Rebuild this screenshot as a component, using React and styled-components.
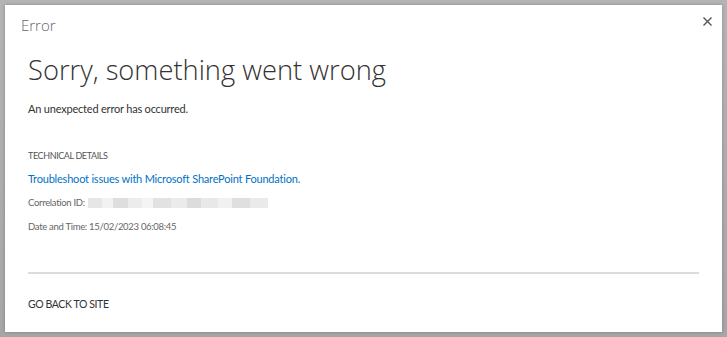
import React from 'react'
import styled, { createGlobalStyle } from 'styled-components'

const GlobalStyle = createGlobalStyle`
  html, body {
    margin: 0;
    padding: 0;
    background: #a9a9a9;
  }
  body {
    font-family: Lato, 'Open Sans', sans-serif;
  }
`

const Backdrop = styled.div`
  width: 727px;
  height: 337px;
  box-sizing: border-box;
  padding: 5px;
  background: linear-gradient(180deg, #b4b4b4 0%, #a6a6a6 100%);
`

const Dialog = styled.div`
  position: relative;
  width: 717px;
  height: 327px;
  box-sizing: border-box;
  background: #fff;
  padding: 9px 23px 0 16px;
  box-shadow: 0 0 3px rgba(0, 0, 0, 0.25);
`

const DialogTitle = styled.div`
  font-family: 'Open Sans', sans-serif;
  font-size: 15px;
  font-weight: 300;
  color: #666;
  line-height: 22px;
`

const Close = styled.button`
  position: absolute;
  top: 8px;
  right: 7px;
  width: 16px;
  height: 16px;
  padding: 0;
  border: 0;
  background: none;
  display: flex;
  align-items: center;
  justify-content: center;
`

const Body = styled.div`
  padding-left: 7px;
`

const Heading = styled.h1`
  margin: 14px 0 0;
  font-family: 'Open Sans', sans-serif;
  font-size: 27.3px;
  font-weight: 300;
  color: #333;
  line-height: 40px;
`

const Message = styled.p`
  margin: 9px 0 0;
  font-size: 11px;
  letter-spacing: -0.2px;
  color: #333;
  line-height: 20px;
`

const SectionLabel = styled.div`
  margin-top: 29px;
  font-size: 9px;
  letter-spacing: -0.4px;
  color: #555;
  line-height: 16px;
`

const Line = styled.div`
  margin-top: ${p => p.gap || 8}px;
  font-size: ${p => p.size || 9.5}px;
  letter-spacing: ${p => p.spacing || -0.3}px;
  color: #666;
  line-height: 16px;
  display: flex;
  align-items: center;
`

const Link = styled.a`
  color: #0072c6;
  text-decoration: none;
`

const Blurred = styled.span`
  display: inline-block;
  width: 180px;
  height: 10px;
  margin-left: 3px;
  background: linear-gradient(90deg,
    #e6e6e6 0 8%, #f2f2f2 8% 14%, #dedede 14% 22%, #ececec 22% 30%,
    #f4f4f4 30% 36%, #e2e2e2 36% 46%, #ebebeb 46% 55%, #dcdcdc 55% 63%,
    #e8e8e8 63% 72%, #f1f1f1 72% 80%, #dfdfdf 80% 90%, #eaeaea 90% 100%);
`

const Divider = styled.hr`
  margin: 37px 0 0;
  border: 0;
  height: 2px;
  background: #dcdcdc;
`

const Footer = styled.div`
  margin-top: 22px;
  font-size: 10.5px;
  letter-spacing: -0.4px;
  color: #333;
  line-height: 16px;
`

export default function App() {
  return (
    <>
      <GlobalStyle />
      <Backdrop>
        <Dialog>
          <DialogTitle>Error</DialogTitle>
          <Close aria-label="Close">
            <svg width="9" height="9" viewBox="0 0 9 9">
              <path d="M0.5 0.5L8.5 8.5M8.5 0.5L0.5 8.5" stroke="#555" strokeWidth="1.4" />
            </svg>
          </Close>
          <Body>
            <Heading>Sorry, something went wrong</Heading>
            <Message>An unexpected error has occurred.</Message>
            <SectionLabel>TECHNICAL DETAILS</SectionLabel>
            <Line gap={7} size={11} spacing={-0.2}>
              <Link href="#">Troubleshoot issues with Microsoft SharePoint Foundation.</Link>
            </Line>
            <Line>Correlation ID: <Blurred /></Line>
            <Line>Date and Time: 15/02/2023 06:08:45</Line>
            <Divider />
            <Footer>GO BACK TO SITE</Footer>
          </Body>
        </Dialog>
      </Backdrop>
    </>
  )
}
